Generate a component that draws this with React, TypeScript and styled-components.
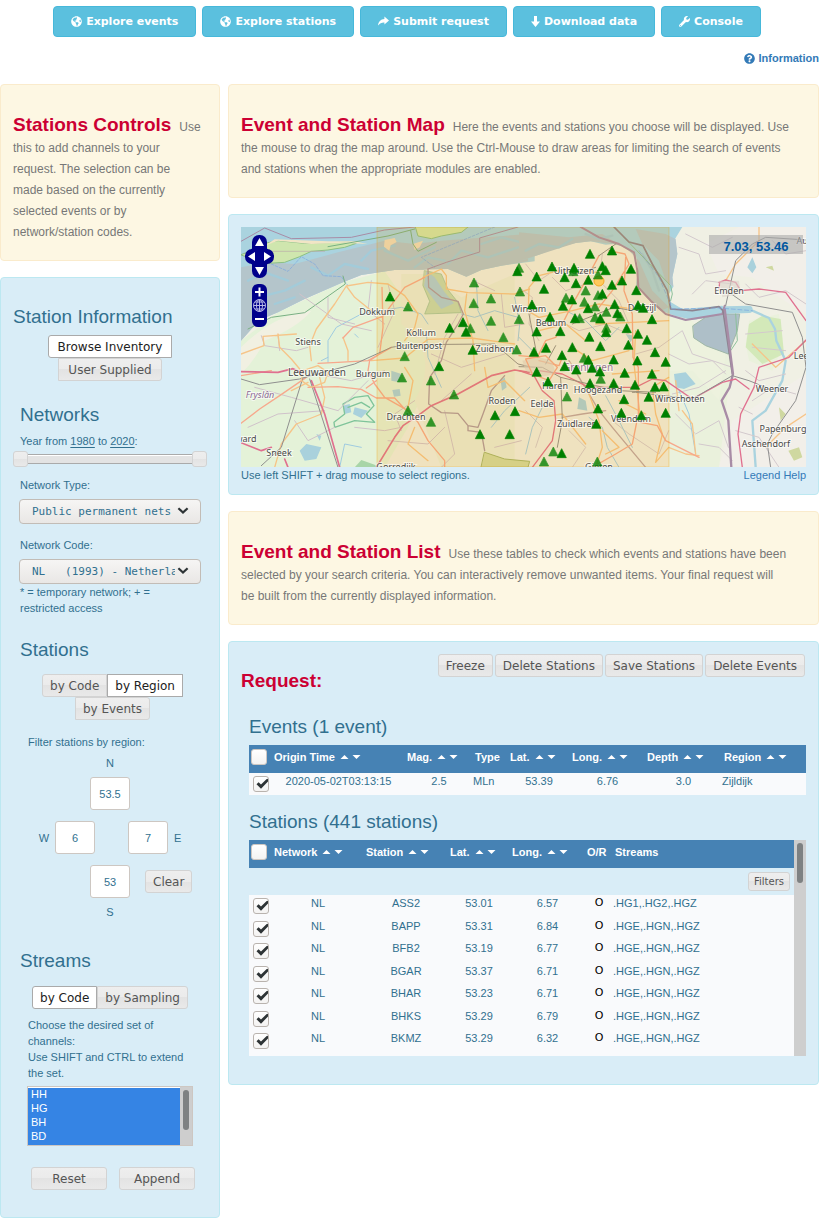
import React from 'react';
import styled, { createGlobalStyle, css } from 'styled-components';
import { FaGlobeAmericas, FaWrench, FaQuestionCircle } from 'react-icons/fa';

const sans = `'Liberation Sans', Arial, sans-serif`;
const ui = `'DejaVu Sans', Verdana, sans-serif`;
const mono = `'DejaVu Sans Mono', monospace`;
const ink = '#31708f';
const accent = '#cc0033';

const GlobalStyle = createGlobalStyle`
  *, *::before, *::after { box-sizing: border-box; }
  body { margin: 0; background: #fff; font: 11px/16px ${sans}; color: ${ink}; }
  h1, h2, h3, p { margin: 0; }
`;

/* ---------- page frame ---------- */

const Nav = styled.nav`
  display: flex;
  justify-content: center;
  gap: 6px;
  padding: 6px 5px 0 0;
`;

const NavButton = styled.button`
  display: inline-flex;
  align-items: center;
  gap: 4px;
  height: 31px;
  padding: 0 17px;
  border: 1px solid #46b8da;
  border-radius: 4px;
  background: #5bc0de;
  color: #fff;
  font: bold 11px/16px ${ui};
  white-space: nowrap;
`;

const InfoBar = styled.div`
  display: flex;
  justify-content: flex-end;
  padding: 13px 0 18px;
`;

const InfoLink = styled.a`
  display: inline-flex;
  align-items: center;
  gap: 4px;
  color: #337ab7;
  font-weight: bold;
  text-decoration: none;
`;

const Page = styled.main`
  display: grid;
  grid-template-columns: 220px minmax(0, 1fr);
  gap: 8px;
  align-items: start;
`;

const Column = styled.div`
  display: flex;
  flex-direction: column;
  gap: 16px;
  min-width: 0;
`;

const Notice = styled.section`
  padding: 30px 12px 17px;
  border: 1px solid #faebcc;
  border-radius: 4px;
  background: #fdf7e3;
  color: #777;
  font-size: 12px;
  line-height: 21px;
`;

const NoticeTitle = styled.h2`
  display: inline;
  margin-right: 8px;
  color: ${accent};
  font-size: 19px;
  line-height: 1;
`;

const Panel = styled.section`
  padding: 12px 12px 11px;
  border: 1px solid #bce8f1;
  border-radius: 4px;
  background: #d9edf7;
`;

const Heading = styled.h3`
  font-size: 19px;
  line-height: 22px;
  font-weight: normal;
`;

/* ---------- form controls ---------- */

const glass = css`
  border: 1px solid #d3d3d3;
  background: linear-gradient(#eeeeee, #ebebeb 50%, #e3e3e3 50%, #e9e9e9);
  color: #555;
`;

const Button = styled.button<{ $width?: number; $small?: boolean }>`
  ${glass}
  flex: none;
  width: ${p => (p.$width ? `${p.$width}px` : 'auto')};
  height: ${p => (p.$small ? 19 : 23)}px;
  padding: 0 ${p => (p.$small ? 5 : 7)}px;
  border-radius: 3px;
  font: ${p => (p.$small ? 10 : 12)}px/16px ${ui};
  white-space: nowrap;
`;

const Toggle = styled.button<{ $edge?: 'left' | 'right' }>`
  ${glass}
  height: 23px;
  padding: 0 7px;
  border-radius: ${p => (p.$edge === 'left' ? '3px 0 0 3px' : p.$edge === 'right' ? '0 3px 3px 0' : '0')};
  font: 12px/16px ${ui};
  white-space: nowrap;
  &[aria-pressed='true'] {
    border-color: #aaa;
    background: #fff;
    color: #212121;
  }
`;

const Toggles = styled.div`
  display: flex;
  flex-wrap: wrap;
  justify-content: center;
`;

const SourceToggles = styled(Toggles)`
  margin-top: 7px;
  ${Toggle} { padding: 0 9px; }
`;

const StationToggles = styled(Toggles)`
  margin: 13px 0 0 5px;
`;

const StreamToggles = styled(Toggles)`
  margin-top: 14px;
`;

const Group = styled.div<{ $top: number }>`
  margin-top: ${p => p.$top}px;
  padding: 0 7px;
`;

const Controls = styled(Panel)`
  padding: 28px 12px 27px;
`;

const YearLine = styled.p`
  margin-top: 7px;
  u { text-decoration: underline; text-underline-offset: 2px; }
`;

const Slider = styled.div`
  position: relative;
  height: 16px;
  margin: 2px -7px 10px;
  padding: 3px 7px 0;
`;

const SliderTrack = styled.div`
  height: 10px;
  border: solid #aaa;
  border-width: 1px 0;
  background: #e3e3e3;
  box-shadow: inset 0 1px 0 #fff;
`;

const SliderInput = styled.input`
  position: absolute;
  inset: 0;
  width: 100%;
  height: 16px;
  margin: 0;
  appearance: none;
  background: none;
  pointer-events: none;
  &::-webkit-slider-thumb {
    ${glass}
    appearance: none;
    width: 15px;
    height: 16px;
    border-radius: 3px;
    pointer-events: auto;
  }
`;

const Field = styled.label`
  display: block;
  margin-bottom: 13px;
`;

const SelectBox = styled.span`
  position: relative;
  display: block;
  margin: 6px -1px 0;
  svg { position: absolute; right: 12px; top: 8px; }
`;

const Select = styled.select`
  appearance: none;
  display: block;
  width: 100%;
  height: 25px;
  padding: 0 25px 0 12px;
  border: 1px solid #c2bcb6;
  border-radius: 4px;
  background: linear-gradient(#f6f5f4, #e9e7e5);
  color: ${ink};
  font: 11px/16px ${mono};
`;

const Note = styled.p`
  margin-top: -13px;
  padding-right: 8px;
`;

const Region = styled.div`
  display: flex;
  flex-direction: column;
  align-items: stretch;
  text-align: center;
  margin: 5px -7px 0;
`;

const RegionRow = styled.div`
  display: flex;
  justify-content: center;
  align-items: center;
  gap: 33px;
  margin: 11px 0;
`;

const RegionFoot = styled.div`
  display: grid;
  grid-template-columns: 1fr 40px 1fr;
  column-gap: 15px;
  align-items: center;
  margin-bottom: 6px;
  & > input { grid-column: 2; }
  & > button { justify-self: start; }
`;

const RegionLabel = styled.label`
  display: inline-flex;
  align-items: center;
  gap: 6px;
`;

const RegionNorth = styled.label`
  display: flex;
  flex-direction: column;
  align-items: center;
  gap: 6px;
`;

const Degree = styled.input`
  width: 40px;
  height: 33px;
  padding: 0;
  border: 1px solid #cdc7c2;
  border-radius: 3px;
  background: #fff;
  color: ${ink};
  font: 11px/16px ${sans};
  text-align: center;
`;

const Inset = styled.div`
  padding: 0 8px;
`;

const ListFrame = styled.div`
  display: flex;
  height: 60px;
  margin-top: 5px;
  margin-left: -1px;
  margin-right: -1px;
  border: 1px solid #cdc7c2;
  background: #fff;
`;

const ListBox = styled.select`
  flex: 1;
  min-width: 0;
  height: 57px;
  margin-top: 1px;
  padding: 0;
  border: 0;
  border-radius: 0;
  outline: 0;
  overflow: hidden;
  background: #3584e4;
  color: #fff;
  font: 11px/14px ${sans};
  option {
    min-height: 14px;
    padding: 0 0 0 3px;
    color: #fff;
  }
  option:checked {
    background: #3584e4 linear-gradient(#3584e4, #3584e4);
    color: #fff;
  }
`;

const ScrollTrack = styled.div`
  flex: none;
  width: 12px;
  padding: 3px;
  background: #cecece;
`;

const ScrollThumb = styled.div`
  width: 6px;
  height: 40px;
  border-radius: 3px;
  background: #7e8182;
`;

const Actions = styled.div`
  display: flex;
  gap: 12px;
  margin-top: 21px;
  padding-left: 11px;
`;

/* ---------- map ---------- */

const MapFrame = styled.div`
  position: relative;
  height: 240px;
  overflow: hidden;
`;

const MapArt = styled.svg`
  display: block;
  width: 100%;
  height: 100%;
`;

const Position = styled.output`
  position: absolute;
  top: 8px;
  right: 3px;
  width: 94px;
  height: 19px;
  padding-top: 4px;
  background: rgba(170, 170, 170, 0.6);
  color: #00579f;
  font: bold 13px/16px ${sans};
  text-align: center;
`;

const MapFooter = styled.div`
  display: flex;
  justify-content: space-between;
  gap: 16px;
  a { color: #337ab7; text-decoration: none; }
`;

const MapControls = styled.svg`
  position: absolute;
  left: 4px;
  top: 8px;
`;

/* ---------- request ---------- */

const RequestPanel = styled(Panel)`
  padding-bottom: 28px;
`;

const RequestHead = styled.div`
  display: flex;
  justify-content: space-between;
  align-items: flex-start;
  height: 62px;
`;

const RequestTitle = styled.h2`
  padding-top: 16px;
  color: ${accent};
  font-size: 19px;
  line-height: 22px;
`;

const ButtonRow = styled.div`
  display: flex;
  gap: 2px;
  padding-right: 1px;
`;

const Block = styled.div<{ $top?: number }>`
  margin-top: ${p => p.$top ?? 0}px;
  padding-left: 8px;
`;

const TableHeading = styled(Heading)`
  margin-bottom: 7px;
`;

const Scroller = styled.div`
  display: flex;
  height: 216px;
  overflow: hidden;
`;

const Table = styled.table`
  width: 100%;
  border-collapse: collapse;
  table-layout: fixed;
  th, td { padding: 0; vertical-align: top; white-space: nowrap; text-align: center; }
  thead tr { height: 28px; background: #4682b4; color: #fff; }
  th { padding: 4px 0 0 2px; text-align: left; }
  tbody tr { height: 22px; background: #f9fafc; }
`;

const TableWrap = styled.div`
  flex: 1;
  min-width: 0;
  thead tr + tr { height: 27px; }
  tbody tr:nth-child(odd) { height: 23px; }
`;

const LeftCell = styled.td`
  && { text-align: left; }
`;

const Access = styled.td`
  color: #000;
  font: 11px/16px ${ui};
`;

const FilterCell = styled.td`
  && {
    height: 27px;
    padding: 4px 4px 0 0;
    background: #d9edf7;
    text-align: right;
  }
`;

const Check = styled.input`
  appearance: none;
  display: block;
  width: 16px;
  height: 16px;
  margin: 0;
  border: 1px solid #cdc7c2;
  border-radius: 3px;
  background: linear-gradient(#fff, #f4f3f2);
`;

const CheckWrap = styled.label`
  position: relative;
  display: block;
  width: 16px;
  margin: 3px 0 0 4px;
  svg { position: absolute; left: 3px; top: 2px; }
  input { border-color: #b9b3ae; }
`;

const SortGroup = styled.span`
  display: inline-flex;
  gap: 3px;
  margin-left: 5px;
  vertical-align: 2px;
`;

const SortButton = styled.button`
  display: block;
  width: 9px;
  height: 4px;
  padding: 0;
  border: 0;
  background: none;
  svg { display: block; }
`;

const Sort = ({ name }: { name: string }) => (
  <SortGroup>
    <SortButton aria-label={`Sort ${name} ascending`}>
      <svg width="9" height="4" viewBox="0 0 9 4"><path d="M0.500 4L4.500 0L8.500 4Z" fill="#fff" /></svg>
    </SortButton>
    <SortButton aria-label={`Sort ${name} descending`}>
      <svg width="9" height="4" viewBox="0 0 9 4"><path d="M0.500 0L4.500 4L8.500 0Z" fill="#fff" /></svg>
    </SortButton>
  </SortGroup>
);

const Ticked = ({ label }: { label: string }) => (
  <CheckWrap>
    <Check type="checkbox" defaultChecked aria-label={label} />
    <svg width="14" height="12" viewBox="0 0 14 12" aria-hidden="true">
      <path d="M0.5 6.2L2.6 4.2L5 6.6L10.4 1.2Q11.6 0.4 12 1.2V3.6L5 10.8Z" fill="#2e3436" />
    </svg>
  </CheckWrap>
);

const Chevron = () => (
  <svg width="12" height="8" viewBox="0 0 12 8" aria-hidden="true">
    <path d="M1.4 1.2L6 5.6L10.6 1.2" fill="none" stroke="#2e3436" strokeWidth="2.2" />
  </svg>
);

const ShareIcon = () => (
  <svg width="11" height="11" viewBox="0 0 11 11" aria-hidden="true">
    <path d="M6.4 0.6L11 4.6L6.4 8.6V6.4C3.6 6.3 1.8 7.2 0 9.6C0.3 5.8 2.6 3.1 6.4 2.9Z" fill="#fff" />
  </svg>
);

const DownIcon = () => (
  <svg width="9" height="11" viewBox="0 0 9 11" aria-hidden="true">
    <path d="M3 0H6V5.5H9L4.5 11L0 5.5H3Z" fill="#fff" />
  </svg>
);

/* Map geometry is kept on two sheets at three units per pixel. */
const WEST = 'translate(-13 -13) scale(0.33333)';
const EAST = 'translate(278 -13) scale(0.33333)';

const westStations: [number, number, number][] = [
  [540, 278, 0], [738, 206, 0], [873, 162, 0], [868, 172, 1], [737, 268, 0], [789, 254, 0], [876, 233, 0],
  [486, 248, 1], [705, 325, 1], [727, 343, 0], [714, 354, 1], [665, 342, 1], [789, 321, 0], [873, 316, 0],
  [826, 370, 0], [734, 408, 1], [866, 407, 0], [530, 427, 0], [633, 457, 1], [522, 491, 0], [609, 500, 0],
  [678, 542, 0], [540, 590, 0], [609, 624, 0], [801, 604, 1], [861, 592, 1], [756, 661, 1], [845, 661, 1],
];

const eastStations: [number, number, number][] = [
  [213, 120, 1], [279, 110, 1], [99, 158, 1], [163, 172, 0], [165, 162, 1], [250, 157, 1], [260, 169, 1], [336, 165, 1],
  [53, 188, 1], [137, 190, 1], [237, 182, 0], [208, 198, 1], [309, 200, 1], [171, 208, 1], [279, 213, 1],
  [75, 225, 1], [200, 230, 0], [352, 229, 1], [237, 244, 0], [250, 240, 1], [141, 252, 0], [159, 257, 1],
  [196, 264, 0], [39, 272, 1], [132, 276, 1], [228, 278, 0], [207, 283, 1], [287, 271, 1], [357, 274, 1],
  [372, 282, 1], [262, 294, 0], [304, 308, 0], [295, 298, 1], [228, 310, 0], [244, 314, 1], [93, 309, 1],
  [182, 313, 0], [168, 313, 1], [399, 316, 1], [262, 342, 0], [53, 353, 1], [124, 352, 1], [261, 355, 1],
  [323, 343, 1], [357, 360, 1], [211, 369, 1], [384, 378, 1], [328, 393, 1], [244, 397, 1], [160, 400, 1],
  [81, 402, 1], [45, 414, 1], [408, 415, 1], [129, 424, 1], [195, 432, 0], [208, 438, 1], [284, 437, 1],
  [355, 440, 1], [440, 444, 1], [137, 457, 1], [219, 462, 1], [172, 467, 1], [53, 474, 1], [243, 473, 1],
  [317, 477, 1], [399, 480, 1], [245, 495, 0], [87, 503, 1], [213, 508, 1], [284, 508, 1], [348, 513, 1],
  [408, 519, 1], [434, 518, 1], [144, 548, 0], [315, 556, 1], [389, 549, 1], [237, 584, 1], [307, 597, 1],
  [367, 604, 1], [440, 597, 1], [232, 630, 1], [103, 713, 0], [128, 718, 1], [75, 743, 0], [235, 743, 0],
];

const places: [string, number, number][] = [
  ['Dokkum', 136, 88], ['Kollum', 180, 109], ['Buitenpost', 178, 122], ['Stiens', 67, 118], ['Burgum', 132, 150],
  ['Drachten', 165, 193], ['Roden', 261, 177], ['Zuidhorn', 254, 125], ['ward', 5, 215], ['Sneek', 38, 229],
  ['Gorredijk', 155, 243], ['Uithuizen', 333, 47], ['Winsum', 288, 85], ['Bedum', 310, 99], ['Delfzijl', 401, 84],
  ['Haren', 314, 162], ['Hoogezand', 357, 166], ['Eelde', 301, 180], ['Zuidlaren', 336, 200], ['Veendam', 390, 195],
  ['Winschoten', 439, 175], ['Emden', 488, 67], ['Weener', 531, 165], ['Papenburg', 542, 205],
  ['Aschendorf', 525, 220], ['Leer', 562, 132], ['Aurich', 569, 17], ['Gieten', 358, 243],
];

const Triangles = ({ at }: { at: [number, number, number][] }) => (
  <>
    {at.map(([x, y, strong], i) => (
      <path key={i} d={`M${x} ${y - 14}l14 27h-28z`} fill="#008000" stroke="#008000" strokeWidth="2" opacity={strong ? 1 : 0.78} />
    ))}
  </>
);

const RegionMap = () => (
  <MapArt viewBox="0 0 565 240" preserveAspectRatio="xMidYMid slice" role="img" aria-label="Map of events and stations">
    <rect width="565" height="240" fill="#f0f0e4" />
    <g transform={WEST} fill="none" strokeLinecap="round" strokeLinejoin="round">
      {/* pasture and sea */}
      <path d="M39 380L150 295L345 205L470 172L560 300L610 480L540 640L470 760H39Z" fill="#e4f2d8" />
      <path d="M39 400Q140 300 250 290Q210 340 110 380Q80 440 39 480Z" fill="#f1f0e2" />
      <path d="M520 180L600 180L700 250L860 180V760H640L560 560Q640 420 520 330Z" fill="#eaeed8" />
      <path d="M39 39H920V142L820 155L760 168L715 188L660 165L615 160L585 167L500 168L400 183L345 205L230 255L150 295L95 318L70 345L39 380Z" fill="#aad3df" />
      <path d="M39 160L120 145L200 150L330 115L470 80L560 90L640 80L900 60V142L820 155L760 168L715 188L660 165L585 167L500 168L400 183L345 205L230 255L150 295L95 318L39 380Z" fill="#b4c5cb" />
      <path d="M60 200L110 175L180 200M250 160L300 185L350 150L420 165M470 110L540 140L620 100M660 150L700 110L780 130L870 100M90 250L170 230L230 200M140 270L200 250M400 140L430 110L500 95M560 160L600 130L650 140M760 90L820 70L880 85" stroke="#a3cbd9" strokeWidth="7" />
      <path d="M130 150L180 172L220 128L260 150L285 185L340 188L360 215M800 39L580 130L620 160" stroke="#7aa6e0" strokeWidth="2" strokeDasharray="8 5" />
      {/* islands */}
      <path d="M39 122L70 110L110 88L150 80L230 88L300 86L360 84L385 88L350 100L300 108L250 112L215 128L170 145L120 148L80 138Z" fill="#cfe6ae" stroke="#8cc084" strokeWidth="3" />
      <path d="M110 95L150 80L250 90L350 86L418 90L380 82L300 82L140 76Z" fill="#f1e5c5" />
      <path d="M112 112L290 112" stroke="#b9a9a9" strokeWidth="2" />
      <path d="M562 39L570 66L610 74L640 66L700 55L720 39Z" fill="#d2e5a8" stroke="#8cc084" strokeWidth="3" />
      <path d="M470 78L500 72L506 84L488 94L484 110L468 98ZM555 90L585 80L575 100L560 108Z" fill="#efdcbc" />
      <path d="M39 82L110 42L190 74L370 70L470 48L560 39M870 39L755 72V114L655 145L600 165" stroke="#a88ca6" strokeWidth="3" />
      <path d="M300 98L480 66L560 45M548 50L555 90L570 112L625 85M345 186L352 210L230 296L130 310L60 345" stroke="#78b083" strokeWidth="3" />
      {/* lakes */}
      <path d="M590 170L640 180L662 230L690 265L700 296L590 300L605 262L585 215Z" fill="#c6d9ae" stroke="#94bb94" strokeWidth="2" />
      <path d="M595 172L620 190L650 235L678 268L640 285L612 250L588 215Z" fill="#aecdd6" />
      <path d="M215 710L235 690L280 700L265 735L230 740ZM345 575L365 570L370 595L350 600ZM380 580L420 590L400 612L375 600ZM490 470L520 480L515 505L490 500ZM493 528L515 525L518 545L498 548ZM818 500L830 490L836 520L822 530ZM265 660L280 665L275 680Z" fill="#a9d1dc" />
      <path d="M345 570L380 550L420 545L438 575L415 600L440 625L380 620L320 640L318 625L350 600ZM360 580L400 565L425 580" stroke="#7fc49a" strokeWidth="4" />
      <path d="M770 715L830 735L905 742L900 760H760Z" fill="#d2dba0" stroke="#a3b56a" strokeWidth="3" />
      <path d="M380 760L400 738L440 752L450 760Z" fill="#a8d5a8" />
      {/* waterways */}
      <path d="M300 445L300 380L325 340L400 300L460 290L520 280L580 300L600 330M280 440L300 430M380 360L390 370M400 700L350 690L335 760M700 300L740 310L800 290L870 310M790 640L830 590L905 520M860 250L875 330L870 380M745 200L750 290L780 350M595 350L600 430L640 520" stroke="#9fcbe0" strokeWidth="3" />
      {/* lanes and municipal borders */}
      <path d="M100 365L110 395L205 410L240 400M150 365L155 410M215 240L340 330L430 350M300 250V310L380 330M430 200L420 290L470 330M480 210L500 290L450 400M265 480L370 500L470 470M80 520L190 550L330 590M200 620L240 680L320 640M330 590L420 500M60 640L150 600L290 590M380 640L470 650L520 640M480 680L600 690L650 640M560 560L500 600L520 650M610 420L700 460L830 420M640 560L730 480M690 300L650 370L620 480M820 240L830 340L890 330M735 200L800 230M650 590L680 720L640 760M800 700L880 680" stroke="#d0c2ca" strokeWidth="3" />
      <path d="M600 165L602 220L640 250L690 262L706 300L690 330L655 385L640 440L605 490L602 570L640 596L690 598L720 635L750 640L765 600L790 530L830 485M720 635V650L760 655L770 710" stroke="#ad98a0" strokeWidth="4" />
      {/* secondary roads */}
      <path d="M355 216L380 250L430 290M250 440L245 395L265 345L320 270L355 216L420 205L480 210L530 245L570 300L560 340L530 380M205 360L105 367L108 395L39 420M150 360L155 400L190 435L215 465M585 190L640 165L655 185L655 225L720 236L860 240L905 225M716 240L710 290L735 380L740 470M430 440L530 432L600 376L730 372L860 390M530 460L555 500L540 580M345 370L360 410V440M275 490L290 550L280 600L205 630L160 690L140 760M770 460L780 520L830 500L890 560M600 740L540 690L560 640M240 505L190 530" stroke="#f6c488" strokeWidth="4" />
      {/* primary roads and motorways */}
      <path d="M345 372L375 340L462 308M462 220L465 340L455 420L425 440L420 470L440 510L470 550L540 590L570 625L600 680L650 740V760M462 310L530 220L590 190M270 448L330 445L420 440L490 400M39 485L130 470M415 522L445 500M240 520L330 518L400 526L445 552H500L530 585M235 490L155 545L95 585L39 628" stroke="#f7a88c" strokeWidth="4" />
      <path d="M39 473L150 475L195 464L225 478M445 760L500 670L525 635L570 605L610 575L690 540L790 485L860 468L905 475M250 500L290 600L335 760M39 686L100 710L130 700M170 735L180 760" stroke="#e0708f" strokeWidth="5" />
      {/* rail */}
      <path d="M39 495L95 512L215 495L250 485L380 450L490 400L540 392L800 390L870 450L905 458M225 490L160 700L100 755M245 495L330 760" stroke="#8f8f8f" strokeWidth="3" />
      <path d="M225 470L270 455L300 475L290 505L250 520L220 500Z" stroke="#f6c488" strokeWidth="4" />
    </g>
    <g transform={EAST} fill="none" strokeLinecap="round" strokeLinejoin="round">
      <path d="M449 290L560 380L640 430L600 760H449ZM690 320L780 300L790 400L760 470L690 440L680 390Z" fill="#eaf1dc" />
      <path d="M480 300L520 320L560 380L620 420L600 560L520 470L449 470V300Z" fill="#edf2de" />
      <path d="M690 330L730 305L785 315L795 420L730 450L680 400Z" fill="#d3e9b9" />
      <path d="M660 39H861V300L780 250L700 190L600 180L560 90Z" fill="#f2efe9" />
      <path d="M640 620L861 480V760H600Z" fill="#f2efe9" />
      <path d="M0 39H490L468 75L475 120L460 190L463 218L450 240L456 265L490 285L610 275L630 300L560 312L520 318L470 306L425 290L378 246L352 212L357 160L350 120L320 100L285 90L260 92L215 82L170 87L110 102L60 122L0 142Z" fill="#aad3df" />
      <path d="M0 55L150 70L250 60L330 110L360 140L400 230L450 280L425 290L378 246L352 212L357 160L350 120L320 100L285 90L215 82L170 87L60 122L0 142ZM350 45L440 60L470 75L475 120L460 190L463 218L440 200L420 140L370 90Z" fill="#b4c5cb" />
      <path d="M20 110L60 90L120 100L160 75M200 60L240 75L280 65M370 120L400 170L420 230" stroke="#a3cbd9" strokeWidth="7" />
      <path d="M522 335L560 310L610 300H662L655 350L628 420L560 395L525 372Z" fill="#aebfc8" stroke="#9fb7a6" strokeWidth="3" />
      <path d="M450 285L520 305L620 292L700 290L750 312L768 345L772 380L800 440L790 500L740 590L700 620L710 760" stroke="#aad3df" strokeWidth="7" />
      <path d="M470 290L530 305L620 288L690 286" stroke="#aad3df" strokeWidth="22" />
      <path d="M465 480L500 475L530 510L495 525L470 520ZM700 130L712 160L700 178L685 160ZM180 550L200 560L205 590L175 585ZM320 360L345 365L335 385Z" fill="#a9d1dc" />
      <path d="M808 710L840 700L850 730L825 740ZM780 580L800 600L785 620ZM740 160L760 155L765 170Z" fill="#cfd8a0" />
      <path d="M315 70L455 215L460 240L455 260M650 300L655 380L628 420" stroke="#8cc09a" strokeWidth="3" />
      <path d="M20 150L60 200L90 180M100 190L140 230L200 210M0 220L40 250L30 330L60 380M120 320L180 350L260 330L330 360M250 120L240 200L300 260L330 330M350 420L420 400L490 350L520 420L640 460M449 420L510 450L580 440L620 480M460 540L540 520L620 470M470 600L530 660L600 620L628 700M480 100L540 120L560 180L620 170M500 60L580 100L640 70M520 240L560 200L640 210M680 210L720 250L800 230L861 270M760 80L800 120L861 110M680 470L720 500L800 480M700 560L760 520L830 540M650 650L720 670L780 760M660 580L700 600M540 690L600 700L640 740M280 620L330 660L420 720L449 650M20 590L70 640L50 700M150 650L200 700L160 760M680 360L790 350M700 400L800 410" stroke="#d3c9cd" strokeWidth="3" />
      <path d="M150 440L240 590L280 640L380 760M130 610L190 600L260 590" stroke="#bda5a6" strokeWidth="4" />
      <path d="M210 610L250 640L265 700L300 760M260 545L300 620L340 700M80 560L40 640L20 720M480 530L510 600L530 720M0 370L60 430M140 290L200 320L260 380L300 340" stroke="#9fcbe0" strokeWidth="3" />
      <path d="M185 39L240 70L300 90L345 115L355 170L358 220L395 260L440 300L500 318L610 300L617 275" stroke="#a88ca6" strokeWidth="6" />
      <path d="M285 39L330 84L372 95L400 150L445 230L455 285L520 290L600 278L612 290L640 480" stroke="#8d8390" strokeWidth="5" />
      <path d="M617 285L642 480L632 520L608 560L628 620L637 760" stroke="#a88ca6" strokeWidth="7" />
      <path d="M360 110L420 190L460 285L600 282L700 290" stroke="#7aa6e0" strokeWidth="2" strokeDasharray="12 8" />
      {/* secondary roads */}
      <path d="M28 290L30 220L60 185L120 170L240 175M25 290L60 310L160 290L240 270L340 285M449 320L340 325L230 330M449 490L400 520L410 600L430 660L410 745L449 700L500 720L540 725M350 350L345 450L365 620M210 540L240 620L250 700L230 760M250 650L300 700L260 720M490 590L520 630L530 720M470 500L480 590M620 200L650 150L720 80V39M700 390L770 460L861 380M740 700L800 640L861 600M0 590L60 610L130 600L200 690M60 350L140 330L200 380M160 400L220 440L330 410M300 560L380 600M280 480L420 470" stroke="#f6c488" strokeWidth="4" />
      {/* primary roads */}
      <path d="M240 280L280 230L330 150L318 120L270 110M240 125L200 200L150 290L130 330L110 370L80 380L55 430M320 130L315 230L340 300L342 430L358 460L358 600L340 690L290 720L220 760M365 625L415 635L440 680L480 700L540 730M60 440L120 455L130 430M0 425L60 430" stroke="#f7a88c" strokeWidth="4" />
      <path d="M0 470L45 485L70 530L105 560L110 620L100 680L40 760M60 470L130 480L210 520H350L400 495L440 500L520 555L610 505L650 495L690 525M600 205L620 198L650 205L665 230L720 225L800 235L861 320M600 225L602 205M861 378L810 430L720 460L705 520L665 600L657 660L670 760" stroke="#e0708f" strokeWidth="4" />
      {/* rail */}
      <path d="M0 458L70 460L125 490L230 515L300 530L410 535M125 490L130 620L115 700M55 430L30 300M80 450L110 395M160 330L285 280L340 290M340 535H350L520 555L640 485L690 500L740 520M630 235L680 270L820 295L850 370L861 460L830 560L760 660L745 690L755 760M620 275L650 140L700 90L740 70L861 78" stroke="#8f8f8f" strokeWidth="3" />
      <path d="M240 125L290 90M160 185L230 160" stroke="#8f8f8f" strokeWidth="3" />
      {/* built-up areas */}
      <path d="M10 440L60 430L100 440L110 480L60 490L20 470ZM600 200L660 200L665 240L610 250Z" fill="#dcd3cc" opacity="0.6" />
      <path d="M20 435L80 425L115 460L90 500L40 480Z" stroke="#f7a88c" strokeWidth="4" />
    </g>
    <rect x="136" width="292" height="240" fill="#ee9a00" fillOpacity="0.16" stroke="#ee9a00" strokeOpacity="0.3" />
    <g fontFamily="'Noto Sans', sans-serif" fontSize="9" textAnchor="middle" fill="#4a4a48" stroke="#fff" strokeOpacity="0.6" strokeWidth="2" paintOrder="stroke">
      {places.map(([name, x, y]) => (
        <text key={name} x={x} y={y}>{name}</text>
      ))}
      <text x="76" y="149" fontSize="10">Leeuwarden</text>
      <text x="19" y="171" fill="#8b6a94" fontStyle="italic">Fryslân</text>
      <text x="347" y="144" fontSize="10" fill="#9a7a93">Groningen</text>
    </g>
    <circle cx="358" cy="54" r="5" fill="#ffc95c" stroke="#f5a623" />
    <g transform={WEST}><Triangles at={westStations} /></g>
    <g transform={EAST}><Triangles at={eastStations} /></g>
  </MapArt>
);

const MapTools = () => (
  <MapControls width="29" height="93" viewBox="0 0 29 93" role="img" aria-label="Pan and zoom">
    <g fill="#00008b">
      <rect x="7" y="0" width="15" height="43" rx="7" />
      <rect x="0" y="14" width="29" height="15" rx="7" />
      <circle cx="14.500" cy="21.500" r="11" />
      <rect x="7" y="49" width="15" height="43" rx="6" />
    </g>
    <g fill="#fff">
      <path d="M14.500 3L19 11H10ZM14.500 40L10 32H19ZM3 21.500L10 17V26ZM26 21.500L19 17V26Z" />
      <path d="M10 56H13.500V52.500H15.500V56H19V58H15.500V61.500H13.500V58H10ZM10 83H19V85H10Z" />
    </g>
    <g fill="none" stroke="#b9b9e6">
      <circle cx="14.500" cy="70.500" r="6" />
      <path d="M8.500 70.500H20.500M14.500 64.500V76.500M10 67H19M10 74H19" />
      <ellipse cx="14.500" cy="70.500" rx="3" ry="6" />
    </g>
  </MapControls>
);

const stationRows: [string, string, string, string][] = [
  ['ASS2', '53.01', '6.57', '.HG1,.HG2,.HGZ'],
  ['BAPP', '53.31', '6.84', '.HGE,.HGN,.HGZ'],
  ['BFB2', '53.19', '6.77', '.HGE,.HGN,.HGZ'],
  ['BGAR', '53.37', '6.71', '.HGE,.HGN,.HGZ'],
  ['BHAR', '53.23', '6.71', '.HGE,.HGN,.HGZ'],
  ['BHKS', '53.29', '6.79', '.HGE,.HGN,.HGZ'],
  ['BKMZ', '53.29', '6.32', '.HGE,.HGN,.HGZ'],
];

const Columns = ({ widths }: { widths: number[] }) => (
  <colgroup>
    {widths.map((w, i) => <col key={i} width={w} />)}
    <col />
  </colgroup>
);

const StationControls = () => (
  <Controls>
    <Heading>Station Information</Heading>
    <SourceToggles>
      <Toggle $edge="left" aria-pressed="true">Browse Inventory</Toggle>
      <Toggle $edge="right" aria-pressed="false">User Supplied</Toggle>
    </SourceToggles>

    <Group $top={23}>
      <Heading>Networks</Heading>
      <YearLine>Year from <u>1980</u> to <u>2020</u>:</YearLine>
      <Slider>
        <SliderTrack />
        <SliderInput type="range" min={1980} max={2020} defaultValue={1980} aria-label="First year" />
        <SliderInput type="range" min={1980} max={2020} defaultValue={2020} aria-label="Last year" />
      </Slider>
      <Field>
        Network Type:
        <SelectBox>
          <Select><option>Public permanent nets</option></Select>
          <Chevron />
        </SelectBox>
      </Field>
      <Field>
        Network Code:
        <SelectBox>
          <Select><option>{'NL\u00a0\u00a0\u00a0(1993) - Netherlands'}</option></Select>
          <Chevron />
        </SelectBox>
      </Field>
      <Note>* = temporary network; + = restricted access</Note>
    </Group>

    <Group $top={23}>
      <Heading>Stations</Heading>
    </Group>
    <StationToggles>
      <Toggle $edge="left" aria-pressed="false">by Code</Toggle>
      <Toggle aria-pressed="true">by Region</Toggle>
      <Toggle $edge="right" aria-pressed="false">by Events</Toggle>
    </StationToggles>
    <Group $top={14}>
      <Inset>Filter stations by region:</Inset>
      <Region>
        <RegionNorth>N<Degree defaultValue="53.5" /></RegionNorth>
        <RegionRow>
          <RegionLabel>W<Degree defaultValue="6" /></RegionLabel>
          <RegionLabel><Degree defaultValue="7" />E</RegionLabel>
        </RegionRow>
        <RegionFoot>
          <Degree id="south" defaultValue="53" />
          <Button $width={47}>Clear</Button>
        </RegionFoot>
        <label htmlFor="south">S</label>
      </Region>
    </Group>

    <Group $top={30}>
      <Heading>Streams</Heading>
    </Group>
    <StreamToggles>
      <Toggle $edge="left" aria-pressed="true">by Code</Toggle>
      <Toggle $edge="right" aria-pressed="false">by Sampling</Toggle>
    </StreamToggles>
    <Group $top={8}>
      <Inset>
        <label htmlFor="channels">
          Choose the desired set of channels:<br />Use SHIFT and CTRL to extend the set.
        </label>
        <ListFrame>
          <ListBox id="channels" multiple size={4} defaultValue={['HH', 'HG', 'BH', 'BD']}>
            <option>HH</option>
            <option>HG</option>
            <option>BH</option>
            <option>BD</option>
          </ListBox>
          <ScrollTrack><ScrollThumb /></ScrollTrack>
        </ListFrame>
      </Inset>
      <Actions>
        <Button $width={76}>Reset</Button>
        <Button $width={76}>Append</Button>
      </Actions>
    </Group>
  </Controls>
);

const RequestView = () => (
  <RequestPanel>
    <RequestHead>
      <RequestTitle>Request:</RequestTitle>
      <ButtonRow>
        <Button>Freeze</Button>
        <Button>Delete Stations</Button>
        <Button>Save Stations</Button>
        <Button>Delete Events</Button>
      </ButtonRow>
    </RequestHead>
    <Block>
      <TableHeading>Events (1 event)</TableHeading>
      <Table>
        <Columns widths={[23, 133, 68, 35, 62, 75, 77]} />
        <thead>
          <tr>
            <th><Check type="checkbox" aria-label="All events" /></th>
            <th>Origin Time<Sort name="origin time" /></th>
            <th>Mag.<Sort name="magnitude" /></th>
            <th>Type</th>
            <th>Lat.<Sort name="latitude" /></th>
            <th>Long.<Sort name="longitude" /></th>
            <th>Depth<Sort name="depth" /></th>
            <th>Region<Sort name="region" /></th>
          </tr>
        </thead>
        <tbody>
          <tr>
            <td><Ticked label="Zijldijk" /></td>
            <td>2020-05-02T03:13:15</td>
            <td>2.5</td>
            <LeftCell>MLn</LeftCell>
            <td>53.39</td>
            <td>6.76</td>
            <td>3.0</td>
            <LeftCell>Zijldijk</LeftCell>
          </tr>
        </tbody>
      </Table>
    </Block>
    <Block $top={16}>
      <TableHeading>Stations (441 stations)</TableHeading>
      <Scroller>
        <TableWrap>
          <Table>
            <Columns widths={[23, 92, 84, 62, 75, 28]} />
            <thead>
              <tr>
                <th><Check type="checkbox" aria-label="All stations" /></th>
                <th>Network<Sort name="network" /></th>
                <th>Station<Sort name="station" /></th>
                <th>Lat.<Sort name="latitude" /></th>
                <th>Long.<Sort name="longitude" /></th>
                <th>O/R</th>
                <th>Streams</th>
              </tr>
              <tr>
                <FilterCell colSpan={7}><Button $small>Filters</Button></FilterCell>
              </tr>
            </thead>
            <tbody>
              {stationRows.map(([code, lat, lon, streams]) => (
                <tr key={code}>
                  <td><Ticked label={code} /></td>
                  <td>NL</td>
                  <td>{code}</td>
                  <td>{lat}</td>
                  <td>{lon}</td>
                  <Access>O</Access>
                  <LeftCell>{streams}</LeftCell>
                </tr>
              ))}
              <tr>
                <td><Ticked label="Next station" /></td>
                <td colSpan={6} />
              </tr>
            </tbody>
          </Table>
        </TableWrap>
        <ScrollTrack><ScrollThumb /></ScrollTrack>
      </Scroller>
    </Block>
  </RequestPanel>
);

export default function App() {
  return (
    <>
      <GlobalStyle />
      <Nav>
        <NavButton><FaGlobeAmericas size={11} />Explore events</NavButton>
        <NavButton><FaGlobeAmericas size={11} />Explore stations</NavButton>
        <NavButton><ShareIcon />Submit request</NavButton>
        <NavButton><DownIcon />Download data</NavButton>
        <NavButton><FaWrench size={11} />Console</NavButton>
      </Nav>
      <InfoBar>
        <InfoLink href="#information"><FaQuestionCircle size={11} />Information</InfoLink>
      </InfoBar>
      <Page>
        <Column>
          <Notice>
            <NoticeTitle>Stations Controls</NoticeTitle>
            Use<br />this to add channels to your<br />request. The selection can be<br />made based on the
            currently<br />selected events or by<br />network/station codes.
          </Notice>
          <StationControls />
        </Column>
        <Column>
          <Notice>
            <NoticeTitle>Event and Station Map</NoticeTitle>
            Here the events and stations you choose will be displayed. Use<br />the mouse to drag the map around. Use
            the Ctrl-Mouse to draw areas for limiting the search of events<br />and stations when the appropriate
            modules are enabled.
          </Notice>
          <Panel>
            <MapFrame>
              <RegionMap />
              <MapTools />
              <Position>7.03, 53.46</Position>
            </MapFrame>
            <MapFooter>
              <span>Use left SHIFT + drag mouse to select regions.</span>
              <span><a href="#legend">Legend</a> <a href="#help">Help</a></span>
            </MapFooter>
          </Panel>
          <Notice>
            <NoticeTitle>Event and Station List</NoticeTitle>
            Use these tables to check which events and stations have been<br />selected by your search criteria. You
            can interactively remove unwanted items. Your final request will<br />be built from the currently
            displayed information.
          </Notice>
          <RequestView />
        </Column>
      </Page>
    </>
  );
}
